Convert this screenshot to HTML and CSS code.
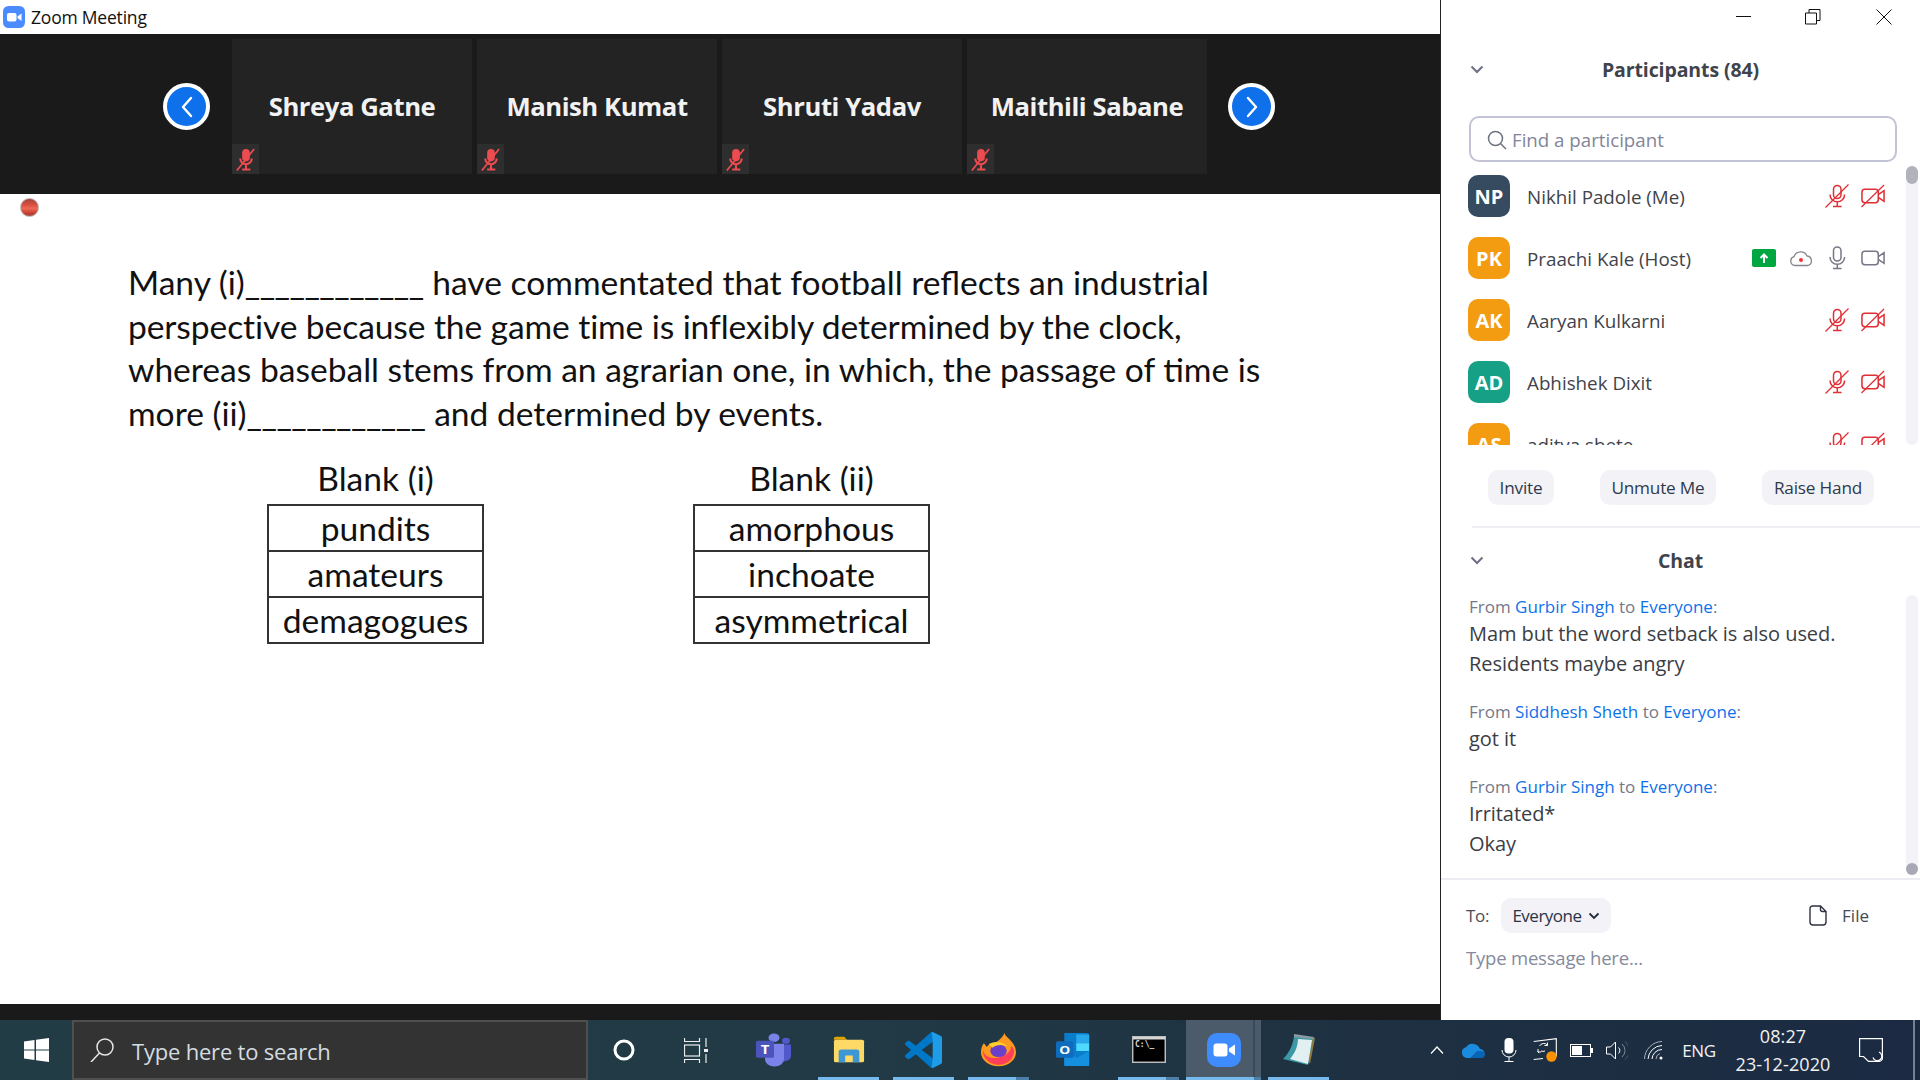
FILE: index.html
```html
<!DOCTYPE html>
<html lang="en">
<head>
<meta charset="utf-8">
<title>Zoom Meeting</title>
<link rel="stylesheet" href="styles.css">
</head>
<body>
<svg class="sprite" width="0" height="0" aria-hidden="true">
  <symbol id="mic-off" viewBox="0 0 24 24"><g fill="none" stroke="#e02f35" stroke-width="1.5"><rect x="8.500" y="1.500" width="7.500" height="13" rx="3.700"/><path d="M5 10.500a7.300 7.300 0 0 0 14.600 0M12.300 18v4.500M8 22.500h8.600"/><path d="M0.500 23.500L23.500 0.500" stroke-width="1.300"/></g></symbol>
  <symbol id="cam-off" viewBox="0 0 25 24"><g fill="none" stroke="#e02f35" stroke-width="1.600"><path d="M4 5h11a3 3 0 0 1 3 3v8a3 3 0 0 1-3 3H4a3 3 0 0 1-3-3V8a3 3 0 0 1 3-3z"/><path d="M18 10.500l6-4v11l-6-4"/><path d="M0.500 23.500L24 0.500" stroke-width="1.300"/></g></symbol>
  <symbol id="mute-small" viewBox="0 0 20 24"><rect x="6.500" y="1" width="8" height="13" rx="4" fill="#ec4c50"/><path d="M4.500 11a6 6 0 0 0 12 0M10.500 17v5M6.500 22.500h8.500" fill="none" stroke="#ec4c50" stroke-width="2.200"/><path d="M1 23.500L19 1" stroke="#ec4c50" stroke-width="1.800"/></symbol>
  <symbol id="chev" viewBox="0 0 14 9"><path d="M1.500 1.500L7 7l5.500-5.500" fill="none" stroke="#6e6e85" stroke-width="2"/></symbol>
</svg>

<div class="screen">
  <main class="window">
    <section class="meeting">
      <header class="titlebar">
        <svg class="zoom-mark" viewBox="0 0 22 22"><rect width="22" height="22" rx="5.500" fill="#4a8cff"/><rect x="4" y="7" width="9.500" height="8.500" rx="2" fill="#fff"/><path d="M14.500 10.500l4-3v7.500l-4-3z" fill="#fff"/></svg>
        <span class="title-text">Zoom Meeting</span>
      </header>

      <div class="strip">
        <button class="nav nav-prev"><svg viewBox="0 0 14 24"><path d="M11 3L3 12l8 9" fill="none" stroke="#fff" stroke-width="2.400" stroke-linecap="round" stroke-linejoin="round"/></svg></button>
        <div class="tiles">
          <div class="tile"><span class="tile-name">Shreya Gatne</span><span class="tile-mute"><svg viewBox="0 0 20 24"><use href="#mute-small"/></svg></span></div>
          <div class="tile"><span class="tile-name">Manish Kumat</span><span class="tile-mute"><svg viewBox="0 0 20 24"><use href="#mute-small"/></svg></span></div>
          <div class="tile"><span class="tile-name">Shruti Yadav</span><span class="tile-mute"><svg viewBox="0 0 20 24"><use href="#mute-small"/></svg></span></div>
          <div class="tile"><span class="tile-name">Maithili Sabane</span><span class="tile-mute"><svg viewBox="0 0 20 24"><use href="#mute-small"/></svg></span></div>
        </div>
        <button class="nav nav-next"><svg viewBox="0 0 14 24"><path d="M3 3l8 9-8 9" fill="none" stroke="#fff" stroke-width="2.400" stroke-linecap="round" stroke-linejoin="round"/></svg></button>
      </div>

      <div class="slide">
        <span class="rec-dot"></span>
        <p class="passage">
          <span class="line">Many (i)<span class="fill">____________</span> have commentated that football reflects an industrial</span>
          <span class="line line-tight">perspective because the game time is inflexibly determined by the clock,</span>
          <span class="line">whereas baseball stems from an agrarian one, in which, the passage of time is</span>
          <span class="line">more (ii)<span class="fill">____________</span> and determined by events.</span>
        </p>
        <div class="blanks">
          <div class="blank blank-one">
            <div class="blank-title">Blank (i)</div>
            <table class="blank-table"><tr><td>pundits</td></tr><tr><td>amateurs</td></tr><tr><td>demagogues</td></tr></table>
          </div>
          <div class="blank blank-two">
            <div class="blank-title">Blank (ii)</div>
            <table class="blank-table"><tr><td>amorphous</td></tr><tr><td>inchoate</td></tr><tr><td>asymmetrical</td></tr></table>
          </div>
        </div>
      </div>
      <div class="meeting-foot"></div>
    </section>

    <aside class="panel">
      <div class="winctl">
        <svg class="wc wc-min" viewBox="0 0 16 16"><path d="M0 7.500h15" stroke="#111" stroke-width="1" fill="none"/></svg>
        <svg class="wc" viewBox="0 0 16 16"><path d="M0.500 4h11v11h-11zM4 4V0.500h11V11.500h-3.500" stroke="#111" stroke-width="1" fill="none"/></svg>
        <svg class="wc" viewBox="0 0 16 16"><path d="M0.500 0.500l15 15M15.500 0.500l-15 15" stroke="#111" stroke-width="1" fill="none"/></svg>
      </div>

      <div class="section-head">
        <svg class="chev" viewBox="0 0 14 9"><use href="#chev"/></svg>
        <h2>Participants (84)</h2>
      </div>

      <div class="find">
        <svg viewBox="0 0 20 20"><circle cx="8.500" cy="8.500" r="7" fill="none" stroke="#6f7280" stroke-width="1.500"/><path d="M13.500 13.500l5.500 5.500" stroke="#6f7280" stroke-width="1.500"/></svg>
        <span>Find a participant</span>
      </div>

      <div class="list-wrap">
        <ul class="people">
          <li class="person"><span class="avatar navy">NP</span><span class="person-name">Nikhil Padole (Me)</span><span class="person-icons"><svg class="ic"><use href="#mic-off"/></svg><svg class="ic"><use href="#cam-off"/></svg></span></li>
          <li class="person"><span class="avatar amber">PK</span><span class="person-name">Praachi Kale (Host)</span>
            <span class="person-icons">
              <svg class="ic-share" viewBox="0 0 24 18"><rect width="24" height="18" rx="2" fill="#00a63f"/><path d="M12 14V6M8.500 9l3.500-3.500L15.500 9" fill="none" stroke="#fff" stroke-width="2"/></svg>
              <svg class="ic-cloud" viewBox="0 0 24 16"><path d="M6 15a4.500 4.500 0 0 1-1-8.800A7 7 0 0 1 18 5.500a4.800 4.800 0 0 1 0.500 9.500z" fill="none" stroke="#85858f" stroke-width="1.300"/><circle cx="12" cy="9.500" r="2" fill="#f3303a"/></svg>
              <svg class="ic" viewBox="0 0 24 24"><g fill="none" stroke="#777885" stroke-width="1.500"><rect x="8.500" y="1" width="7.500" height="14" rx="3.700"/><path d="M5 11a7.300 7.300 0 0 0 14.600 0M12.300 18.500v4M8 22.500h8.600"/></g></svg>
              <svg class="ic" viewBox="0 0 25 24"><g fill="none" stroke="#777885" stroke-width="1.600"><rect x="1" y="5" width="17" height="14" rx="3"/><path d="M18 10.500l6-4v11l-6-4"/></g></svg>
            </span></li>
          <li class="person"><span class="avatar amber">AK</span><span class="person-name">Aaryan Kulkarni</span><span class="person-icons"><svg class="ic"><use href="#mic-off"/></svg><svg class="ic"><use href="#cam-off"/></svg></span></li>
          <li class="person"><span class="avatar teal">AD</span><span class="person-name">Abhishek Dixit</span><span class="person-icons"><svg class="ic"><use href="#mic-off"/></svg><svg class="ic"><use href="#cam-off"/></svg></span></li>
          <li class="person"><span class="avatar amber">AS</span><span class="person-name">aditya shete</span><span class="person-icons"><svg class="ic"><use href="#mic-off"/></svg><svg class="ic"><use href="#cam-off"/></svg></span></li>
        </ul>
        <div class="track"><span class="thumb"></span></div>
      </div>

      <div class="actions">
        <button class="btn btn-invite">Invite</button>
        <button class="btn btn-unmute">Unmute Me</button>
        <button class="btn btn-raise">Raise Hand</button>
      </div>

      <div class="rule"></div>

      <div class="section-head chat-head">
        <svg class="chev" viewBox="0 0 14 9"><use href="#chev"/></svg>
        <h2>Chat</h2>
      </div>

      <div class="chat-wrap">
        <div class="chat">
          <div class="msg"><div class="from">From <a>Gurbir Singh</a> to <a>Everyone</a>:</div><div class="say">Mam but the word setback is also used.</div><div class="say">Residents maybe angry</div></div>
          <div class="msg"><div class="from">From <a>Siddhesh Sheth</a> to <a>Everyone</a>:</div><div class="say">got it</div></div>
          <div class="msg"><div class="from">From <a>Gurbir Singh</a> to <a>Everyone</a>:</div><div class="say">Irritated*</div><div class="say">Okay</div></div>
        </div>
        <div class="track chat-track"><span class="knob"></span></div>
      </div>

      <div class="compose-row">
        <span class="to">To:</span>
        <span class="pill">Everyone<svg viewBox="0 0 12 8"><path d="M1.500 1.500L6 6l4.500-4.500" fill="none" stroke="#222b3a" stroke-width="1.800"/></svg></span>
        <span class="file">
          <svg viewBox="0 0 18 21"><path d="M3.500 1H11.500L17 6.500V17a3 3 0 0 1-3 3H4a3 3 0 0 1-3-3V3.500A2.500 2.500 0 0 1 3.500 1zM11.500 1V4.500A2 2 0 0 0 13.500 6.500H17" fill="none" stroke="#2d3240" stroke-width="1.400"/></svg>
          File
        </span>
      </div>
      <div class="compose">Type message here...</div>
    </aside>
  </main>

  <footer class="taskbar">
    <div class="tb-start"><svg viewBox="0 0 25 24"><path fill="#fff" d="M0 3.500L10.500 2v9.400H0zM12 1.800L25 0v11.400H12zM0 12.600h10.500V22L0 20.500zM12 12.600h13V24l-13-1.800z"/></svg></div>
    <div class="tb-search">
      <svg viewBox="0 0 25 24"><circle cx="15" cy="9" r="8" fill="none" stroke="#e6e6e6" stroke-width="1.500"/><path d="M9.500 15L1 24" stroke="#e6e6e6" stroke-width="1.500"/></svg>
      <span>Type here to search</span>
    </div>
    <div class="tb-tool tb-tool-cortana"><svg viewBox="0 0 22 22"><circle cx="11" cy="11" r="9" fill="none" stroke="#fff" stroke-width="3"/></svg></div>
    <div class="tb-tool"><svg viewBox="0 0 24 25"><g fill="none" stroke="#eee" stroke-width="1.200"><path d="M0.500 0v3.500h15V0M0.500 25v-3.500h15V25"/><rect x="0.500" y="7" width="15" height="11"/><path d="M22 0v9M22 16v9"/></g><rect x="20" y="11" width="4" height="3" fill="#eee"/></svg></div>

    <div class="apps">
      <div class="app">
        <svg class="i-teams" viewBox="0 0 36 44" preserveAspectRatio="none"><circle cx="18" cy="6" r="5.500" fill="#7b83eb"/><circle cx="30" cy="10" r="4" fill="#5059c9"/><path d="M22 15h13v15a7 7 0 0 1-10 6z" fill="#5059c9"/><path d="M9 14h19v20a9.500 9.500 0 0 1-19 0z" fill="#7b83eb"/><rect x="0" y="10" width="18" height="22" rx="2" fill="#4b53bc"/><text x="9" y="27" class="logo-t">T</text></svg>
      </div>
      <div class="app running">
        <svg class="i-folder" viewBox="0 0 34 36" preserveAspectRatio="none"><path d="M1 3a2 2 0 0 1 2-2h9l3 4h-14z" fill="#e0a400"/><rect x="1" y="5" width="32" height="30" rx="2" fill="#ffd966"/><path d="M6 35V21a3 3 0 0 1 3-3h16a3 3 0 0 1 3 3v14h-7v-9h-8v9z" fill="#3c98d4"/></svg>
      </div>
      <div class="app running">
        <svg class="i-code" viewBox="0 0 100 100" preserveAspectRatio="none"><path fill="#0078c8" d="M96.500 10.800L75.900 0.900a6.200 6.200 0 0 0-7.100 1.200L29.400 38 12.200 25a4.200 4.200 0 0 0-5.300 0.200L1.400 30.200a4.200 4.200 0 0 0 0 6.200L16.300 50 1.400 63.600a4.200 4.200 0 0 0 0 6.200l5.500 5a4.200 4.200 0 0 0 5.300 0.200L29.400 62l39.400 35.900a6.200 6.200 0 0 0 7.100 1.200l20.600-9.900a6.200 6.200 0 0 0 3.500-5.600V16.400a6.200 6.200 0 0 0-3.500-5.600zM75 72.700L45.100 50 75 27.300z"/><path fill="#1f9ce8" d="M72 0.300a6 6 0 0 1 3.900 0.600l20.600 9.900a6.200 6.200 0 0 1 3.500 5.600v67.200a6.200 6.200 0 0 1-3.500 5.600L75.900 99.100a6 6 0 0 1-3.900 0.600L75 72.700V27.300z"/></svg>
      </div>
      <div class="app running split">
        <svg class="i-fox" viewBox="0 0 36 46" preserveAspectRatio="none"><path d="M24 0c1 6 12 12 12 26a18 19 0 0 1-36 0c0-5 1-9 3-12l3 5c2-6 8-5 11-8 3-3 6-6 7-11z" fill="#ff9a1f"/><path d="M2 22a16 19 0 0 0 32 4c0-4-1-6-3-9 0 6-2 12-13 16C8 36 3 30 2 22z" fill="#ff3f5a"/><circle cx="18" cy="24" r="8.500" fill="#6b3fc9"/><path d="M8 15c6-4 14-4 19 3-6-3-12-2-15 2z" fill="#ffcf2e"/></svg>
      </div>
      <div class="app">
        <svg class="i-outlook" viewBox="0 0 38 44" preserveAspectRatio="none"><path d="M9 0h24a3 3 0 0 1 3 3v38a3 3 0 0 1-3 3H12a3 3 0 0 1-3-3z" fill="#0a7ccc"/><rect x="22" y="2" width="14" height="14" fill="#28a8ea"/><rect x="22" y="14" width="14" height="10" fill="#50d9ff"/><path d="M9 24l14 9 13-9v20H9z" fill="#1490df"/><rect x="0" y="11" width="19" height="22" rx="2" fill="#0f6cbd"/><text x="9.500" y="28" class="logo-t">O</text></svg>
      </div>
      <div class="app running split">
        <svg class="i-cmd" viewBox="0 0 34 27" preserveAspectRatio="none"><rect x="0.700" y="0.700" width="32.600" height="25.600" fill="#000" stroke="#bdbdbd" stroke-width="1.500"/><rect x="1" y="1" width="32" height="2.500" fill="#d6d6d6"/><text x="3" y="11" class="logo-cmd">C:\_</text></svg>
      </div>
      <div class="app running active split">
        <svg class="i-zoom" viewBox="0 0 34 34" preserveAspectRatio="none"><rect width="34" height="34" rx="10" fill="#3f8cff"/><rect x="6.500" y="10.500" width="14" height="13" rx="3" fill="#fff"/><path d="M22 15.500l6-4v11l-6-4z" fill="#fff"/></svg>
      </div>
      <div class="app running">
        <svg class="i-pad" viewBox="0 0 32 31" preserveAspectRatio="none"><path d="M12 1l20 3-5 26z" fill="#96793a"/><path d="M11 2L30 4 25 31 0 25C6 19 10 11 11 2z" fill="#3d98a5"/><path d="M15 5L29 6 25 30 7 25C12 19 15 12 15 5z" fill="#e2f0f1"/><path d="M11 0l20 3-1 2L11 3z" fill="#8a9aa3"/></svg>
      </div>
    </div>

    <div class="tray">
      <span class="tray-cell"><svg class="t-caret" viewBox="0 0 14 8"><path d="M1 7.500L7 1l6 6.500" fill="none" stroke="#fff" stroke-width="1.200"/></svg></span>
      <span class="tray-cell"><svg class="t-cloud" viewBox="0 0 24 16"><path d="M6 16a5.500 5.500 0 0 1-1-10.800A8 8 0 0 1 19 7a4.500 4.500 0 0 1 0 9z" fill="#1a8ce0"/><path d="M9 16l7-7 5 0a4 4 0 0 1 3 3.500A3.500 3.500 0 0 1 20 16z" fill="#0a64b4"/></svg></span>
      <span class="tray-cell"><svg class="t-mic" viewBox="0 0 16 24"><rect x="3.500" y="0" width="9" height="15.500" rx="4" fill="#fff"/><path d="M1 12a7 7 0 0 0 14 0M8 19v4M3.500 23.500h9" fill="none" stroke="#fff" stroke-width="1"/></svg></span>
      <span class="tray-cell"><svg class="t-sync" viewBox="0 0 24 24"><path d="M0.700 3.500L23.300 0.700V18H15M10 20.500L0.700 21.500z" fill="none" stroke="#fff" stroke-width="1.100"/><path d="M6.500 8a5 5 0 0 1 8-1M6 15l-1.500-1.500M14.500 4.500v3h-3M8 13a5 5 0 0 0 4 0M5 11v3h3" fill="none" stroke="#fff" stroke-width="1"/><circle cx="18.500" cy="18.500" r="5.200" fill="#ff9200"/></svg></span>
      <span class="tray-cell"><svg class="t-batt" viewBox="0 0 23 13"><rect x="0.500" y="0.500" width="20" height="12" fill="none" stroke="#fff"/><rect x="2" y="2" width="10" height="9" fill="#fff"/><rect x="21" y="4" width="2" height="5" fill="#fff"/></svg></span>
      <span class="tray-cell"><svg class="t-vol" viewBox="0 0 22 19"><path d="M0.500 6h4L9.500 1v17l-5-5h-4z" fill="none" stroke="#fff"/><path d="M12.500 6.500a4 4 0 0 1 0 6" fill="none" stroke="#fff"/><path d="M16 3a8.500 8.500 0 0 1 0 13" fill="none" stroke="#7e8a98"/><path d="M19 0.500a12 12 0 0 1 0 18" fill="none" stroke="#4e5c70"/></svg></span>
      <span class="tray-cell"><svg class="t-wifi" viewBox="0 0 19 19"><path d="M0.500 18A18 18 0 0 1 18 0.500" fill="none" stroke="#aab2bd"/><path d="M4 18A14.500 14.500 0 0 1 18 4.500" fill="none" stroke="#fff"/><path d="M8 18A10 10 0 0 1 18 8.500" fill="none" stroke="#fff"/><path d="M12 18A6 6 0 0 1 16 12.500" fill="none" stroke="#aab2bd"/><circle cx="17" cy="17" r="1.500" fill="#fff"/></svg></span>
      <span class="tray-lang">ENG</span>
      <span class="tray-clock"><span>08:27</span><span>23-12-2020</span></span>
      <span class="tray-note"><svg viewBox="0 0 24 24"><path d="M0.600 0.600H23.400V19.500A3.500 3.500 0 0 1 19.500 23.400H9.500L4.500 18.500H0.600z" fill="none" stroke="#fff" stroke-width="1.200"/><path d="M20 14a4.500 4.500 0 1 1-6 5.500" fill="none" stroke="#fff" stroke-width="1.200"/></svg></span>
      <span class="tray-edge"></span>
    </div>
  </footer>
</div>
</body>
</html>
```

FILE: styles.css
```css
* { box-sizing: border-box; }
html, body { margin: 0; padding: 0; }
body { width: 1920px; height: 1080px; overflow: hidden; background: #fff; font-family: "Open Sans", "Noto Sans", sans-serif; }
.sprite { display: block; height: 0; width: 0; }
.screen { width: 1920px; height: 1080px; display: flex; flex-direction: column; }
.window { height: 1020px; display: flex; }

/* meeting side */
.meeting { width: 1441px; display: flex; flex-direction: column; border-right: 1px solid #222; }
.titlebar { height: 34px; display: flex; align-items: center; padding-left: 3px; gap: 6px; background: #fff; }
.zoom-mark { width: 22px; height: 22px; }
.title-text { font-size: 17.500px; color: #111; letter-spacing: -0.2px; }

.strip { height: 160px; background: #1a1a1a; display: flex; align-items: center; padding: 5px 0 20px 163px; }
.nav { width: 47px; height: 47px; border-radius: 50%; border: 4px solid #fff; background: #0e71eb; padding: 0; display: flex; align-items: center; justify-content: center; }
.nav svg { width: 14px; height: 24px; }
.tiles { display: flex; gap: 5px; margin: 0 21px 0 22px; }
.tile { position: relative; width: 240px; height: 135px; padding-bottom: 1px; background: #232323; display: flex; align-items: center; justify-content: center; }
.tile-name { color: #f2f2f2; font-size: 25.700px; font-weight: 700; letter-spacing: -0.45px; }
.tile-mute { position: absolute; left: 0; bottom: 0; width: 27px; height: 30px; background: #2e2e2e; display: flex; align-items: center; justify-content: center; }
.tile-mute svg { width: 21px; height: 23px; }

.slide { position: relative; flex: 1; background: #fff; padding: 66px 0 0 128px; }
.rec-dot { position: absolute; left: 20px; top: 4px; width: 19px; height: 19px; border-radius: 50%; background: linear-gradient(180deg, #a8453c 0%, #d9503f 35%, #ee6a55 55%, #c43c30 85%, #a84a40 100%); border: 1px solid #bbb0ae; }
.passage { margin: 0; font-family: Lato, "Open Sans", sans-serif; font-size: 33.600px; color: #111; }
.line { display: block; height: 43.700px; line-height: 44px; white-space: nowrap; }
.line-tight { letter-spacing: -0.1px; }
.fill { letter-spacing: -0.5px; }
.blanks { display: flex; margin: 21px 0 0 139px; font-family: Lato, "Open Sans", sans-serif; color: #111; font-size: 33.600px; }
.blank-one { width: 217px; }
.blank-two { width: 237px; margin-left: 209px; }
.blank-title { height: 48px; line-height: 44px; text-align: center; white-space: nowrap; }
.blank-table { border-collapse: collapse; width: 100%; }
.blank-table td { height: 46px; padding: 0; border: 2px solid #333; text-align: center; line-height: 42px; }
.meeting-foot { height: 16px; background: #1a1a1a; }

/* right panel */
.panel { width: 479px; display: flex; flex-direction: column; background: #fff; }
.winctl { height: 34px; display: flex; justify-content: flex-end; align-items: center; gap: 55px; padding: 0 28px 1px 0; }
.wc { width: 16px; height: 16px; }
.wc-min { margin-right: -2px; }
.section-head { height: 70px; display: grid; grid-template-columns: 1fr auto 1fr; align-items: center; padding-left: 29px; padding-right: 29px; }
.section-head h2 { grid-column: 2; grid-row: 1; margin: 0; font-size: 19.500px; font-weight: 700; color: #3f434c; letter-spacing: -0.1px; }
.chev { grid-column: 1; grid-row: 1; width: 14px; height: 9px; }
.find { height: 46px; margin: 12px 23px 0 28px; border: 2px solid #c3c3d6; border-radius: 10px; display: flex; align-items: center; padding: 1px 0 0 16px; gap: 5px; font-size: 18.700px; color: #82859a; }
.find svg { width: 20px; height: 20px; }

.list-wrap { height: 280px; margin-top: 3px; display: flex; padding-right: 2px; }
.people { flex: 1; list-style: none; margin: 0; padding: 0 21px 0 27px; overflow: hidden; }
.person { height: 62px; display: flex; align-items: center; }
.avatar { width: 42px; height: 42px; border-radius: 10px; display: flex; align-items: center; justify-content: center; color: #fff; font-weight: 700; font-size: 20px; flex: none; }
.navy { background: #364a60; }
.amber { background: #f39c12; }
.teal { background: #16a085; }
.person-name { margin-left: 17px; padding-top: 1px; font-size: 18.800px; color: #3f434c; white-space: nowrap; }
.person-icons { margin-left: auto; display: flex; align-items: center; gap: 12px; }
.ic { width: 24px; height: 24px; }
.ic-share { width: 24px; height: 18px; margin-right: 1px; }
.ic-cloud { width: 24px; height: 17px; }
.track { width: 12px; background: #f2f2f7; border-radius: 6px; flex: none; margin-top: 1px; }
.thumb { display: block; width: 12px; height: 18px; border-radius: 6px; background: #b2b2bd; }

.actions { display: flex; margin-top: 25px; padding-left: 47px; gap: 46px; }
.btn { height: 35px; border: 0; border-radius: 10px; background: #f2f2f7; color: #2f3a4c; font: 400 17.200px "Open Sans", sans-serif; padding: 0; letter-spacing: -0.2px; }
.btn-invite { width: 66px; }
.btn-unmute { width: 116px; }
.btn-raise { width: 112px; }
.rule { height: 2px; margin: 21px 0 0 31px; background: #f0f0f4; }
.chat-head { height: 65px; margin-bottom: 2px; }

.chat-wrap { height: 285px; display: flex; padding-right: 2px; border-bottom: 2px solid #ececf2; }
.chat { flex: 1; padding-left: 28px; }
.msg { margin-bottom: 21px; }
.from { height: 24px; line-height: 24px; font-size: 17px; color: #747887; }
.from a { color: #0e71eb; }
.say { height: 30px; line-height: 30px; font-size: 20px; color: #3a3d44; letter-spacing: -0.05px; }
.chat-track { height: 280px; margin-top: 0; position: relative; }
.knob { position: absolute; left: 0; bottom: 0; width: 12px; height: 12px; border-radius: 50%; background: #a9a9b5; }

.compose-row { display: flex; align-items: center; height: 35px; margin-top: 18px; padding: 0 51px 0 25px; }
.to { font-size: 17px; color: #4a4d58; width: 35px; letter-spacing: -0.3px; }
.pill { width: 110px; height: 35px; border-radius: 10px; background: #f2f2f7; display: flex; align-items: center; justify-content: center; gap: 6px; font-size: 17px; color: #2a3346; letter-spacing: -0.5px; }
.pill svg { width: 12px; height: 8px; }
.file { margin-left: auto; display: flex; align-items: center; gap: 15px; font-size: 17px; color: #444955; }
.file svg { width: 18px; height: 21px; }
.compose { margin: 12px 0 0 25px; height: 26px; line-height: 26px; font-size: 18.500px; color: #858a9c; letter-spacing: -0.2px; }

/* taskbar */
.taskbar { height: 60px; display: flex; background: linear-gradient(90deg, #223c46 0%, #213a45 45%, #1e3142 70%, #1b2a42 100%); color: #fff; }
.tb-start { width: 72px; display: flex; align-items: center; justify-content: center; }
.tb-start svg { width: 25px; height: 24px; }
.tb-search { width: 516px; background: #333; border: 2px solid #4f4f4f; display: flex; align-items: center; padding: 2px 0 0 16px; gap: 17px; color: #d4dce0; font-size: 22px; letter-spacing: -0.2px; }
.tb-search svg { width: 25px; height: 24px; flex: none; margin-top: -2px; }
.tb-tool { width: 72px; display: flex; align-items: center; justify-content: center; }
.tb-tool svg { width: 24px; height: 25px; }
.tb-tool-cortana svg { width: 22px; height: 22px; }
.apps { display: flex; margin-left: 4px; }
.app { position: relative; width: 75px; height: 60px; display: flex; align-items: center; justify-content: center; padding-bottom: 1px; }
.i-teams { width: 36px; height: 34px; }
.i-folder { width: 32px; height: 27px; }
.i-code { width: 37px; height: 36px; }
.i-fox { width: 35px; height: 34px; }
.i-outlook { width: 35px; height: 33px; }
.i-cmd { width: 34px; height: 27px; }
.i-zoom { width: 34px; height: 34px; }
.i-pad { width: 32px; height: 31px; }
.app.active { background: linear-gradient(90deg, #4c5b69 0 90%, #3b4a59 90% 91.500%, #4c5b69 91.500%); }
.app.running::after { content: ""; position: absolute; left: 7px; right: 7px; bottom: 0; height: 3px; background: #76b9ed; }
.app.active::after { left: 0; right: 0; }
.app.split::before { content: ""; position: absolute; right: 7px; bottom: 0; width: 13px; height: 3px; background: #4b7fa8; z-index: 1; }
.app.active.split::before { right: 0; width: 7px; }
.logo-t { font: 700 15px "Open Sans", sans-serif; fill: #fff; text-anchor: middle; }
.logo-cmd { font: 700 8px "DejaVu Sans Mono", monospace; fill: #ddd; }
.tray { margin-left: auto; display: flex; align-items: center; padding-right: 5px; }
.tray-cell { width: 36px; display: flex; align-items: center; justify-content: center; }
.t-caret { width: 14px; height: 8px; }
.t-cloud { width: 24px; height: 16px; }
.t-mic { width: 16px; height: 24px; }
.t-sync { width: 24px; height: 24px; }
.t-batt { width: 23px; height: 13px; }
.t-vol { width: 22px; height: 19px; }
.t-wifi { width: 19px; height: 19px; }
.tray-lang { width: 56px; text-align: center; font-size: 17px; color: #f2f2f2; letter-spacing: -0.3px; }
.tray-clock { width: 112px; display: flex; flex-direction: column; align-items: center; font-size: 18px; line-height: 28.500px; color: #f2f2f2; letter-spacing: 0.1px; }
.tray-note { width: 63px; display: flex; align-items: center; justify-content: center; }
.tray-note svg { width: 24px; height: 24px; }
.tray-edge { width: 2px; height: 60px; margin-left: 11px; background: #76818f; }
```
